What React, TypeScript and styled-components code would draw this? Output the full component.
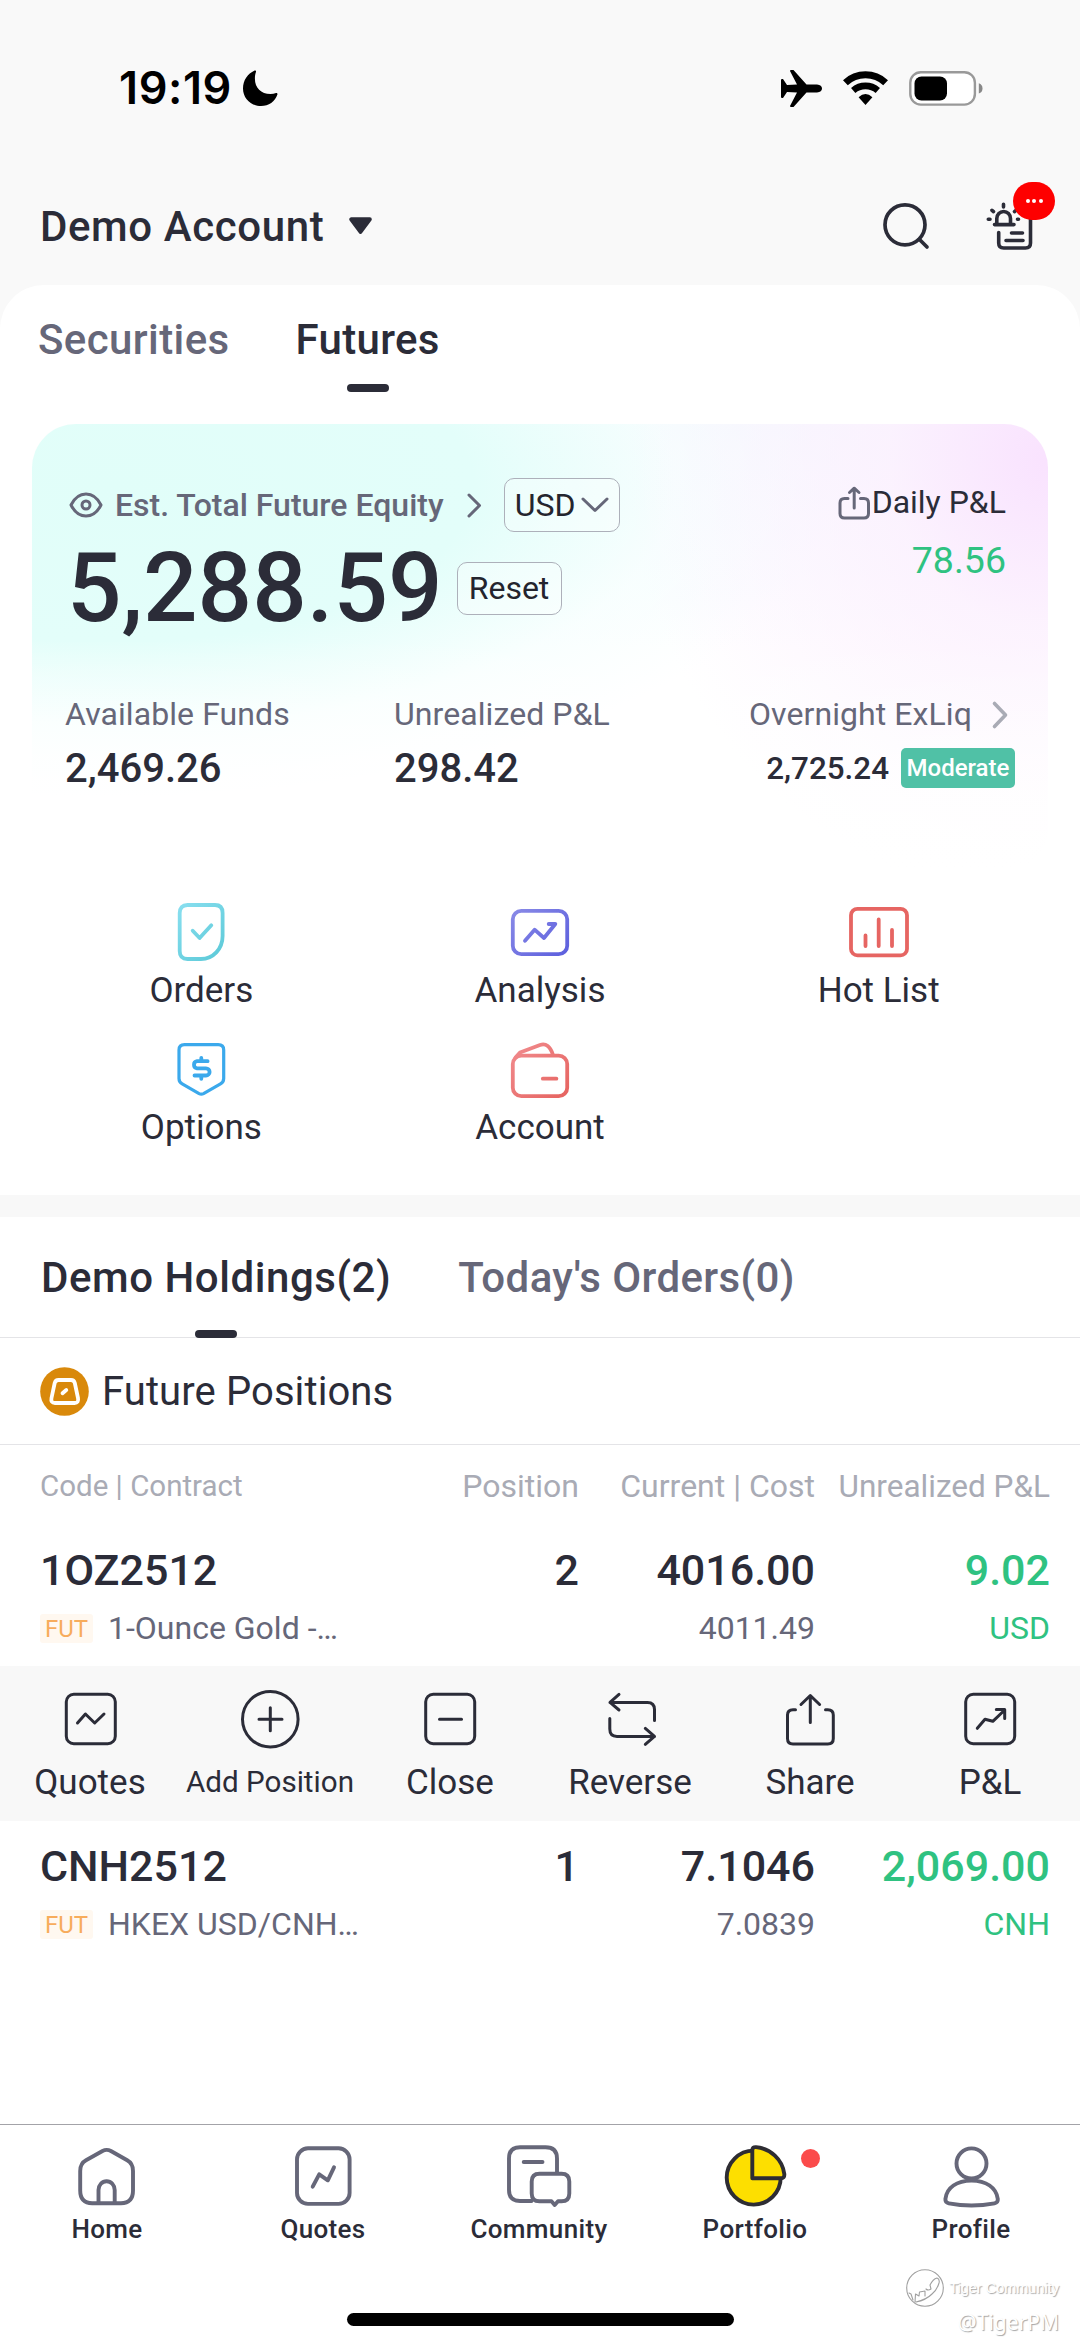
import React from "react";
import styled, { createGlobalStyle } from "styled-components";

const ink = "#2b2c38";
const slate = "#666779";
const mist = "#a9abb5";
const green = "#2fc281";

const GlobalStyle = createGlobalStyle`
  * { box-sizing: border-box; }
  html, body { margin: 0; padding: 0; background: #fff; }
  body { font-family: Roboto, "Liberation Sans", sans-serif; color: ${ink}; }
`;

const Screen = styled.div`
  position: relative;
  width: 1080px;
  height: 2348px;
  display: flex;
  flex-direction: column;
  background: #f9f9f9;
  overflow: hidden;
`;

const StatusBar = styled.div`
  height: 176px;
  padding: 0 97px 0 119px;
  display: flex;
  align-items: center;
`;

const Clock = styled.span`
  font: 600 45px/60px Inter, sans-serif;
  letter-spacing: 0.6px;
  color: #000;
  width: 124px;
`;

const StatusIcons = styled.div`
  margin-left: auto;
  display: flex;
  align-items: center;
  gap: 21px;
`;

const Header = styled.header`
  height: 100px;
  margin-bottom: 9px;
  padding: 0 45px 0 40px;
  display: flex;
  align-items: center;
`;

const AccountName = styled.h1`
  margin: 2px 25px 0 0;
  font-size: 42px;
  font-weight: 500;
  line-height: 60px;
  letter-spacing: 0.6px;
`;

const HeaderIcons = styled.div`
  margin-left: auto;
  display: flex;
  align-items: center;
  gap: 57px;
`;

const BadgeAnchor = styled.div`
  position: relative;
  display: flex;
`;

const MoreBadge = styled.span`
  position: absolute;
  left: 27px;
  top: -20px;
  width: 42px;
  height: 38px;
  border-radius: 19px;
  background: #fe0000;
  display: flex;
  align-items: center;
  justify-content: center;
  gap: 2.5px;
`;

const MoreDot = styled.i`
  width: 4px;
  height: 4px;
  border-radius: 50%;
  background: #fff;
`;

const Panel = styled.main`
  flex: 1;
  background: #fff;
  border-radius: 44px 44px 0 0;
  display: flex;
  flex-direction: column;
`;

const Tabs = styled.div<{ $top: number; $left: number; $gap: number }>`
  display: flex;
  align-items: flex-start;
  gap: ${(p) => p.$gap}px;
  padding: ${(p) => p.$top}px 0 0 ${(p) => p.$left}px;
`;

const HoldingTabs = styled(Tabs)`
  height: 121px;
  border-bottom: 1px solid #e4e4e7;
`;

const Tab = styled.div<{ $active?: boolean; $drop: number; $track?: number }>`
  display: flex;
  flex-direction: column;
  align-items: center;
  font-size: 42px;
  font-weight: 500;
  line-height: 60px;
  letter-spacing: ${(p) => p.$track ?? 0}px;
  white-space: nowrap;
  color: ${(p) => (p.$active ? ink : slate)};
  &::after {
    content: "";
    width: 42px;
    height: 8px;
    margin-top: ${(p) => p.$drop}px;
    border-radius: 4px;
    background: ${(p) => (p.$active ? ink : "transparent")};
  }
`;

const Card = styled.section`
  margin: 32px 32px 0;
  height: 446px;
  border-radius: 44px;
  padding-top: 54px;
  background:
    linear-gradient(to bottom, rgba(255, 255, 255, 0) 0%, rgba(255, 255, 255, 0) 48%, #fff 100%),
    radial-gradient(ellipse 420px 440px at 100% 8%, #f9e2fe 0%, rgba(252, 240, 254, 0.8) 38%, rgba(255, 255, 255, 0) 100%),
    radial-gradient(ellipse 720px 310px at 8% 14%, #e1fef9 0%, #e3fefa 50%, rgba(246, 255, 254, 0.7) 78%, rgba(255, 255, 255, 0) 100%),
    linear-gradient(to bottom, #f5fafe, #fff 50%);
`;

const CardTop = styled.div`
  display: flex;
  justify-content: space-between;
  padding: 0 42px 0 37px;
`;

const EquityLine = styled.div`
  display: flex;
  align-items: center;
  height: 54px;
`;

const EquityLabel = styled.span`
  margin: 0 23px 0 12px;
  font-size: 32px;
  font-weight: 500;
  line-height: 54px;
  color: ${slate};
`;

const OutlineButton = styled.button<{ $w: number; $h: number }>`
  width: ${(p) => p.$w}px;
  height: ${(p) => p.$h}px;
  padding: 0;
  display: flex;
  align-items: center;
  justify-content: center;
  gap: 5px;
  border: 1.5px solid #adb0ba;
  border-radius: 10px;
  background: rgba(255, 255, 255, 0.3);
  font-family: inherit;
  font-size: 32px;
  color: #24252e;
`;

const CurrencyButton = styled(OutlineButton)`
  margin-left: 22px;
`;

const ResetButton = styled(OutlineButton)`
  margin: 0 0 0 14px;
`;

const AmountLine = styled.div`
  display: flex;
  align-items: center;
  height: 80px;
  margin: 16px 0 0 -2px;
`;

const Amount = styled.span`
  font-size: 96px;
  font-weight: 500;
  line-height: 80px;
`;

const DailyPnl = styled.div`
  display: flex;
  flex-direction: column;
  align-items: flex-end;
`;

const DailyLabel = styled.div`
  display: flex;
  align-items: center;
  gap: 2px;
  font-size: 32px;
  line-height: 49px;
`;

const DailyValue = styled.div`
  margin-top: 8px;
  font-size: 37.5px;
  line-height: 50px;
  color: ${green};
`;

const Stats = styled.div`
  display: grid;
  grid-template-columns: 329px 1fr auto;
  margin-top: 62px;
  padding: 0 33px;
`;

const Stat = styled.div<{ $end?: boolean }>`
  display: flex;
  flex-direction: column;
  align-items: ${(p) => (p.$end ? "flex-end" : "flex-start")};
`;

const StatLabel = styled.div<{ $inset?: number }>`
  display: flex;
  align-items: center;
  gap: 20px;
  margin-right: ${(p) => p.$inset ?? 0}px;
  font-size: 32px;
  line-height: 48px;
  letter-spacing: 0.08px;
  color: ${slate};
`;

const StatValue = styled.div<{ $size: number }>`
  display: flex;
  align-items: center;
  gap: 12px;
  height: 48px;
  margin-top: 6px;
  font-size: ${(p) => p.$size}px;
  font-weight: 500;
`;

const RiskTag = styled.span`
  width: 114px;
  height: 40px;
  border-radius: 5px;
  background: #50c1a6;
  color: #fff;
  font-size: 24px;
  line-height: 40px;
  text-align: center;
`;

const Actions = styled.nav`
  display: grid;
  grid-template-columns: repeat(3, 1fr);
  row-gap: 26px;
  padding: 30px 32px 47px;
`;

const Action = styled.div`
  display: flex;
  flex-direction: column;
  align-items: center;
  gap: 7px;
`;

const ActionLabel = styled.span`
  font-size: 35px;
  line-height: 40px;
`;

const Divider = styled.div`
  height: 22px;
  background: #f8f8f8;
`;

const GroupTitle = styled.div`
  height: 107px;
  padding-left: 40px;
  display: flex;
  align-items: center;
  gap: 13px;
  border-bottom: 1px solid #e4e4e7;
  font-size: 40px;
  line-height: 48px;
  letter-spacing: 0.1px;
`;

const GroupName = styled.span`
  padding-top: 2px;
`;

const columns = "1fr 160px 236px 235px";

const TableHead = styled.div`
  display: grid;
  grid-template-columns: ${columns};
  height: 80px;
  padding: 2px 30px 0 40px;
  align-items: center;
  color: ${mist};
`;

const HeadCell = styled.span<{ $size: number; $end?: boolean }>`
  font-size: ${(p) => p.$size}px;
  text-align: ${(p) => (p.$end ? "right" : "left")};
  white-space: nowrap;
`;

const PositionRow = styled.div`
  display: grid;
  grid-template-columns: ${columns};
  height: 141px;
  padding: 20px 30px 0 40px;
`;

const Cell = styled.div<{ $end?: boolean; $color?: string }>`
  display: flex;
  flex-direction: column;
  gap: 10px;
  align-items: ${(p) => (p.$end ? "flex-end" : "flex-start")};
  color: ${(p) => p.$color ?? ink};
`;

const CellMain = styled.span`
  font-size: 43px;
  font-weight: 500;
  line-height: 51px;
`;

const CellSub = styled.span<{ $color?: string }>`
  display: flex;
  align-items: center;
  gap: 15px;
  height: 44px;
  font-size: 32px;
  white-space: nowrap;
  color: ${(p) => p.$color ?? slate};
`;

const FutTag = styled.span`
  width: 53px;
  height: 29px;
  border-radius: 3px;
  background: #fff8f0;
  color: #f7ac5c;
  font-size: 24px;
  line-height: 31px;
  text-align: center;
`;

const Toolbar = styled.div`
  height: 155px;
  padding-top: 23px;
  display: grid;
  grid-template-columns: repeat(6, 180px);
  background: #f8f8f8;
`;

const Tool = styled.div`
  display: flex;
  flex-direction: column;
  align-items: center;
  gap: 13px;
`;

const ToolLabel = styled.span<{ $size: number }>`
  font-size: ${(p) => p.$size}px;
  line-height: 41px;
  white-space: nowrap;
`;

const BottomNav = styled.footer`
  height: 224px;
  margin-top: auto;
  border-top: 1px solid #a3a3a8;
  background: #fff;
  display: flex;
  flex-direction: column;
  align-items: center;
`;

const NavItems = styled.div`
  width: 100%;
  height: 188px;
  padding-top: 19px;
  display: grid;
  grid-template-columns: repeat(5, 1fr);
`;

const NavItem = styled.div`
  position: relative;
  display: flex;
  flex-direction: column;
  align-items: center;
  gap: 5px;
`;

const NavLabel = styled.span`
  margin-right: 2px;
  font-size: 26px;
  font-weight: 500;
  line-height: 32px;
  letter-spacing: 0.35px;
`;

const NavDot = styled.i`
  position: absolute;
  left: 153px;
  top: 5px;
  width: 19px;
  height: 19px;
  border-radius: 50%;
  background: #fb4b4b;
`;

const HomeBar = styled.div`
  width: 387px;
  height: 13px;
  border-radius: 7px;
  background: #000;
`;

const Watermark = styled.div`
  position: absolute;
  right: 21px;
  bottom: 11px;
  display: flex;
  flex-direction: column;
  align-items: flex-end;
  color: #fff;
  text-shadow: 1px 1px 1px #a6a6a6;
`;

const WatermarkBrand = styled.div`
  display: flex;
  align-items: center;
  gap: 5px;
  height: 38px;
  font: 14.5px/20px "Liberation Sans", sans-serif;
`;

const WatermarkUser = styled.div`
  font: 21px/30px "Noto Sans", sans-serif;
`;

const Drawing = styled.svg`
  display: block;
  flex: none;
  overflow: visible;
  fill: none;
  stroke-linecap: round;
  stroke-linejoin: round;
`;

type IconProps = { w: number; h?: number; stroke?: string; sw?: number; children: React.ReactNode };
const Icon = ({ w, h = w, stroke = ink, sw = 3, children }: IconProps) => (
  <Drawing width={w} height={h} viewBox={`0 0 ${w} ${h}`} stroke={stroke} strokeWidth={sw}>
    {children}
  </Drawing>
);

const Grad = ({ id, from, to }: { id: string; from: string; to: string }) => (
  <defs>
    <linearGradient id={id} x1="0" y1="0" x2="64" y2="64" gradientUnits="userSpaceOnUse">
      <stop offset="0" stopColor={from} />
      <stop offset="1" stopColor={to} />
    </linearGradient>
  </defs>
);

const ShareGlyph = () => (
  <>
    <path d="M15.5 20.7H13Q7.5 20.7 7.5 26V49.5Q7.5 55 13 55H47.8Q53.3 55 53.3 49.5V26Q53.3 20.7 47.8 20.7H45.5" />
    <path d="M30.3 33.5V6.5M21 15.5L30.3 6.5L39.6 15.5" />
  </>
);

const actions = [
  {
    label: "Orders",
    icon: (
      <Icon w={64} sw={3.8} stroke="url(#orders)">
        <Grad id="orders" from="#8fe2f3" to="#55c6d4" />
        <path d="M18.5 5H46Q53.6 5 53.6 13V36C53.6 49 44 59 32 59H18.5Q10.7 59 10.7 51V13Q10.7 5 18.5 5Z" />
        <path d="M23.7 30.7L30.6 38L42.3 25.3" />
      </Icon>
    ),
  },
  {
    label: "Analysis",
    icon: (
      <Icon w={64} sw={3.8} stroke="url(#analysis)">
        <Grad id="analysis" from="#8f90e8" to="#5659dc" />
        <rect x="4.8" y="10.8" width="54.4" height="43.4" rx="8.5" />
        <path d="M17 40.7L26.6 29.7L36 38L47.3 24M40.7 24H47.3" />
      </Icon>
    ),
  },
  {
    label: "Hot List",
    icon: (
      <Icon w={64} sw={3.8} stroke="#e66562">
        <rect x="4" y="8.8" width="56" height="46.6" rx="6.5" />
        <path d="M18.5 35.5V46M31.7 19.5V46M45 30V46" />
      </Icon>
    ),
  },
  {
    label: "Options",
    icon: (
      <Icon w={64} sw={3.2} stroke="#3ba9ec">
        <path d="M15.5 7.7H49.2Q54.7 7.7 54.7 13V41.5Q54.7 45 51.5 46.8L34.5 56.6Q32.3 57.8 30.1 56.6L13.2 46.8Q10 45 10 41.5V13Q10 7.7 15.5 7.7Z" />
        <path strokeWidth="3.8" d="M38.6 24.2H28A3.6 3.6 0 0 0 28 31.3H37A3.6 3.6 0 0 1 37 38.5H25.5M32.3 21V24M32.3 39V41.8" />
      </Icon>
    ),
  },
  {
    label: "Account",
    icon: (
      <Icon w={64} sw={3.8} stroke="url(#account)">
        <Grad id="account" from="#f29093" to="#e5605c" />
        <rect x="4.8" y="18.6" width="54.4" height="40.6" rx="8.5" />
        <path d="M7.5 20.5L12 15.5L32 8C38 6 42.3 9.5 44.8 17.5" />
        <path d="M34.8 41.7H48.4" />
      </Icon>
    ),
  },
];

const tools = [
  {
    label: "Quotes",
    icon: (
      <>
        <rect x="6.3" y="5.3" width="49" height="49.4" rx="7.5" />
        <path d="M17.5 34L25.4 25L34.7 34L44 25" />
      </>
    ),
  },
  {
    label: "Add Position",
    small: true,
    icon: (
      <>
        <circle cx="30.3" cy="30.2" r="27.8" />
        <path d="M19 30.3H42M30.3 18.7V41.8" />
      </>
    ),
  },
  {
    label: "Close",
    icon: (
      <>
        <rect x="5.7" y="5.3" width="49" height="49.4" rx="7.5" />
        <path d="M19.5 30.3H41.5" />
      </>
    ),
  },
  {
    label: "Reverse",
    icon: (
      <>
        <path d="M54.5 31.5V20.5Q54.5 13.4 47.5 13.4H10M19 5.4L10 13.4L19 21" />
        <path d="M9.8 29.5V40Q9.8 47.4 17 47.4H54.5M45.3 39.4L54.5 47.4L45.3 55.3" />
      </>
    ),
  },
  { label: "Share", icon: <ShareGlyph /> },
  {
    label: "P&L",
    icon: (
      <>
        <rect x="5.7" y="5.3" width="49" height="49.4" rx="7.5" />
        <path d="M17.3 39.3L25 30.2L32.8 32.3L44.7 21M36.3 20.6H44.7V29.5" />
      </>
    ),
  },
];

const navItems = [
  {
    label: "Home",
    icon: (
      <>
        <path d="M4.2 27C4.2 21.5 6 18.5 10 16.3L26.5 7Q30.7 4.8 34.9 7L51.2 16.3C55.2 18.5 57 21.5 57 27V46.5Q57 59.2 45 59.2H16.2Q4.2 59.2 4.2 46.5Z" />
        <path d="M22.5 59V46A8.1 8.8 0 0 1 38.7 46V59" />
      </>
    ),
  },
  {
    label: "Quotes",
    icon: (
      <>
        <rect x="5" y="4.3" width="52.6" height="55.6" rx="11" />
        <path d="M20.7 42.7L27.2 30.3L35.8 36.3L42 23.3" />
      </>
    ),
  },
  {
    label: "Community",
    icon: (
      <>
        <path d="M23.5 57H12Q1 57 1 46V14.5Q1 3.2 12 3.2H37.5Q49 3.2 49 14.5V29" />
        <path d="M31.5 29.8H53.5Q61.3 29.8 61.3 37.5V49.5Q61.3 57.3 53.5 57.3H50L46.7 61L43.5 57.3H31.5Q23.7 57.3 23.7 49.5V37.5Q23.7 29.8 31.5 29.8Z" />
        <path d="M15.7 18H34.5" />
      </>
    ),
  },
  {
    label: "Portfolio",
    dot: true,
    icon: (
      <g stroke="#2e2d33" fill="#fddf00">
        <circle cx="29.7" cy="33.6" r="27" />
        <path d="M28.3 34.2V6.5Q28.3 2.8 32 3.1C46.5 4.5 58.5 15.5 60.3 30Q60.7 34.2 56.8 34.2Z" />
      </g>
    ),
  },
  {
    label: "Profile",
    icon: (
      <>
        <circle cx="31.5" cy="19.4" r="15" />
        <path d="M5.4 55C6.5 43.5 17 36.6 31.5 36.6C46 36.6 56.5 43.5 57.8 55Q58.1 58.6 54.5 59.3C40 62 23 62 8.8 59.3Q5.1 58.6 5.4 55Z" />
      </>
    ),
  },
];

const positions = [
  { code: "1OZ2512", name: "1-Ounce Gold -…", qty: "2", price: "4016.00", cost: "4011.49", pnl: "9.02", ccy: "USD" },
  { code: "CNH2512", name: "HKEX USD/CNH…", qty: "1", price: "7.1046", cost: "7.0839", pnl: "2,069.00", ccy: "CNH" },
];

const Position = ({ item }: { item: (typeof positions)[number] }) => (
  <PositionRow>
    <Cell>
      <CellMain>{item.code}</CellMain>
      <CellSub>
        <FutTag>FUT</FutTag>
        {item.name}
      </CellSub>
    </Cell>
    <Cell $end>
      <CellMain>{item.qty}</CellMain>
    </Cell>
    <Cell $end>
      <CellMain>{item.price}</CellMain>
      <CellSub>{item.cost}</CellSub>
    </Cell>
    <Cell $end $color={green}>
      <CellMain>{item.pnl}</CellMain>
      <CellSub $color={green}>{item.ccy}</CellSub>
    </Cell>
  </PositionRow>
);

export default function App() {
  return (
    <>
      <GlobalStyle />
      <Screen>
        <StatusBar>
          <Clock>19:19</Clock>
          <Icon w={35} h={36} stroke="none">
            <path fill="#000" d="M11.6.6C12.4.2 13.4.8 13 1.8C12.2 4 11.9 6 11.9 8.5C11.9 18 18 24 27.5 24C29.5 24 31.3 23.700 33 23.1C34 22.8 34.7 23.6 34.4 24.5C32 31.5 25.8 36 18 36C8 36 0 28.5 0 18.5C0 10.5 4.5 4 11.6.6Z" />
          </Icon>
          <StatusIcons>
            <Icon w={41} h={37} stroke="none">
              <path fill="#000" d="M0 10Q0 9 1 9H2L6 15L16 14.5L9 1Q9 0 10 0H12.5L25.5 14.5H36Q41 15 41 18.5Q41 22 36 22.5H25.5L12.5 37H10Q9 37 9 36L16 22.5L6 22L2 28H1Q0 28 0 27Z" />
            </Icon>
            <Icon w={45} h={34} stroke="#000">
              <g strokeLinecap="butt">
                <path strokeWidth="7" d="M2.4 11.7A29.5 29.5 0 0 1 42.6 11.7" />
                <path strokeWidth="6.6" d="M10.2 19.5A18.8 18.8 0 0 1 34.8 19.5" />
              </g>
              <path stroke="none" fill="#000" d="M22.5 34L15.6 26.3Q22.5 19.8 29.4 26.3Z" />
            </Icon>
            <Icon w={74} h={35} stroke="#999" sw={2.4}>
              <rect x="1.3" y="1.2" width="64.6" height="32.4" rx="10.5" fill="#fff" />
              <rect x="5.5" y="5.5" width="32.5" height="24" rx="7" fill="#000" stroke="none" />
              <path d="M69.8 12.3Q73.5 13.5 73.5 17.4Q73.5 21.3 69.8 22.5Z" fill="#888" stroke="none" />
            </Icon>
          </StatusIcons>
        </StatusBar>

        <Header>
          <AccountName>Demo Account</AccountName>
          <Icon w={23} h={18} stroke={ink} sw={4}>
            <path fill={ink} d="M2.2 2.3H20.8L11.5 14.8Z" />
          </Icon>
          <HeaderIcons>
            <Icon w={46} h={46} sw={3.7}>
              <circle cx="22" cy="21.8" r="20" />
              <path d="M36.5 36.5L44 44" />
            </Icon>
            <BadgeAnchor>
              <Icon w={49} h={48} sw={3.6}>
                <path d="M12.7 30.5V41Q12.7 46 17.7 46H39.5Q44.5 46 44.5 41V12M25.5 31H36.5M20 38.5H37" />
                <path d="M8.5 22.6H28M10.8 22V16.5A6.8 7 0 0 1 24.5 16.5V22M2.3 17.2H4M31.5 17.2H32.5M17.5 2.3V5M6 8.3L7.5 9.6M28.5 9.6L30 8.3" />
              </Icon>
              <MoreBadge>
                <MoreDot />
                <MoreDot />
                <MoreDot />
              </MoreBadge>
            </BadgeAnchor>
          </HeaderIcons>
        </Header>

        <Panel>
          <Tabs $top={25} $left={38} $gap={66}>
            <Tab $drop={14} $track={0.4}>Securities</Tab>
            <Tab $drop={14} $track={0.3} $active>Futures</Tab>
          </Tabs>

          <Card>
            <CardTop>
              <div>
                <EquityLine>
                  <Icon w={34} h={26} stroke={slate} sw={3}>
                    <path d="M2 13Q7.5 2 17 2T32 13Q26.5 24 17 24T2 13Z" />
                    <circle cx="17" cy="13" r="4" />
                  </Icon>
                  <EquityLabel>Est. Total Future Equity</EquityLabel>
                  <Icon w={15} h={25} stroke={slate}>
                    <path d="M2 2L12.5 12.5L2 23" />
                  </Icon>
                  <CurrencyButton $w={116} $h={54}>
                    USD
                    <Icon w={28} h={16} stroke={slate}>
                      <path d="M2 2L14 13.5L26 2" />
                    </Icon>
                  </CurrencyButton>
                </EquityLine>
                <AmountLine>
                  <Amount>5,288.59</Amount>
                  <ResetButton $w={105} $h={53}>Reset</ResetButton>
                </AmountLine>
              </div>
              <DailyPnl>
                <DailyLabel>
                  <Icon w={32} h={34} stroke={slate}>
                    <path d="M10 12.5H6.5Q2 12.5 2 17V27.5Q2 32 6.5 32H26Q30.5 32 30.5 27.5V17Q30.5 12.5 26 12.5H22.5" />
                    <path d="M16.2 22V2.5M11.5 6.5L16.2 2.2L21 6.5" />
                  </Icon>
                  Daily P&amp;L
                </DailyLabel>
                <DailyValue>78.56</DailyValue>
              </DailyPnl>
            </CardTop>
            <Stats>
              <Stat>
                <StatLabel>Available Funds</StatLabel>
                <StatValue $size={40}>2,469.26</StatValue>
              </Stat>
              <Stat>
                <StatLabel>Unrealized P&amp;L</StatLabel>
                <StatValue $size={40}>298.42</StatValue>
              </Stat>
              <Stat $end>
                <StatLabel $inset={7}>
                  Overnight ExLiq
                  <Icon w={16} h={26} stroke={mist} sw={3.6}>
                    <path d="M2.5 2.5L13.5 14L2.5 25.5" />
                  </Icon>
                </StatLabel>
                <StatValue $size={31.4}>
                  2,725.24
                  <RiskTag>Moderate</RiskTag>
                </StatValue>
              </Stat>
            </Stats>
          </Card>

          <Actions>
            {actions.map((a) => (
              <Action key={a.label}>
                {a.icon}
                <ActionLabel>{a.label}</ActionLabel>
              </Action>
            ))}
          </Actions>

          <Divider />

          <HoldingTabs $top={31} $left={41} $gap={67}>
            <Tab $drop={22} $track={0.55} $active>Demo Holdings(2)</Tab>
            <Tab $drop={22} $track={0.4}>Today's Orders(0)</Tab>
          </HoldingTabs>

          <GroupTitle>
            <Icon w={49} h={49} stroke="#fff" sw={3.8}>
              <circle cx="24.5" cy="24.5" r="24.3" fill="#d9890b" stroke="none" />
              <path d="M18.5 13H31Q34 13 34.8 16L38 31Q39 36 34.5 36H15Q10.5 36 11.5 31L14.7 16Q15.5 13 18.5 13Z" />
              <path d="M22.5 26.3L26.3 23" />
            </Icon>
            <GroupName>Future Positions</GroupName>
          </GroupTitle>

          <TableHead>
            <HeadCell $size={29.5}>Code | Contract</HeadCell>
            <HeadCell $size={32} $end>Position</HeadCell>
            <HeadCell $size={32} $end>Current | Cost</HeadCell>
            <HeadCell $size={31.5} $end>Unrealized P&amp;L</HeadCell>
          </TableHead>

          <Position item={positions[0]} />
          <Toolbar>
            {tools.map((t) => (
              <Tool key={t.label}>
                <Icon w={60} sw={3}>{t.icon}</Icon>
                <ToolLabel $size={t.small ? 29.6 : 35}>{t.label}</ToolLabel>
              </Tool>
            ))}
          </Toolbar>
          <Position item={positions[1]} />

          <BottomNav>
            <NavItems>
              {navItems.map((n) => (
                <NavItem key={n.label}>
                  <Icon w={64} sw={3.9} stroke={slate}>{n.icon}</Icon>
                  <NavLabel>{n.label}</NavLabel>
                  {n.dot && <NavDot />}
                </NavItem>
              ))}
            </NavItems>
            <HomeBar />
          </BottomNav>
        </Panel>

        <Watermark>
          <WatermarkBrand>
            <Icon w={38} h={38} stroke="#a0a0a0" sw={1.1}>
              <circle cx="19" cy="19" r="18.3" />
              <path d="M3 24L5 25L7 31M9 33L9.5 25L13 27L13.5 23L19 22V27M20 20Q22 22 25 20L24 16Q27 10 31 9Q34 10 33 14Q31 21 26 25Q20 31 10 33" />
            </Icon>
            Tiger Community
          </WatermarkBrand>
          <WatermarkUser>@TigerPM</WatermarkUser>
        </Watermark>
      </Screen>
    </>
  );
}
